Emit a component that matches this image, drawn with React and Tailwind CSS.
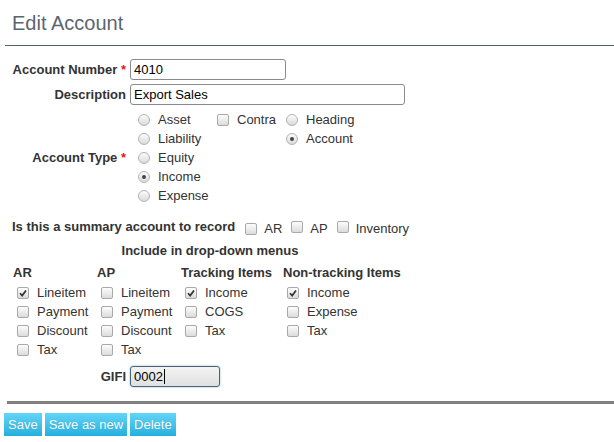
import React from 'react';

// old-style grey checkbox
const Check = ({ checked }) => (
  <span className="relative inline-block w-[12px] h-[12px] shrink-0 rounded-[2px] border border-[#a9a9a9] bg-gradient-to-b from-[#fcfcfc] to-[#dcdcdc]">
    {checked && (
      <svg className="absolute inset-0" width="10" height="10" viewBox="0 0 10 10">
        <path d="M2 5.2 L4.2 7.6 L8 2.6" fill="none" stroke="#333" strokeWidth="1.7" />
      </svg>
    )}
  </span>
);

const Radio = ({ checked }) => (
  <span className="relative inline-flex items-center justify-center w-[12px] h-[12px] shrink-0 rounded-full border border-[#b3b3b3] bg-gradient-to-b from-[#fcfcfc] to-[#dadada]">
    {checked && <span className="w-[4px] h-[4px] rounded-full bg-[#444]" />}
  </span>
);

const Option = ({ radio, checked, label }) => (
  <div className="flex items-center h-[19px]">
    {radio ? <Radio checked={checked} /> : <Check checked={checked} />}
    <span className="ml-[8px]">{label}</span>
  </div>
);

const Req = () => <span className="text-[#e02020]">*</span>;

const columns = [
  { title: 'AR', width: 'w-[84px]', items: [['Lineitem', true], ['Payment'], ['Discount'], ['Tax']] },
  { title: 'AP', width: 'w-[84px]', items: [['Lineitem'], ['Payment'], ['Discount'], ['Tax']] },
  { title: 'Tracking Items', width: 'w-[102px]', items: [['Income', true], ['COGS'], ['Tax']] },
  { title: 'Non-tracking Items', width: 'w-[140px]', items: [['Income', true], ['Expense'], ['Tax']] },
];

const App = () => {
  return (
    <div className="min-h-screen bg-white font-['Liberation_Sans',Arial,sans-serif] text-[13px] text-[#333]">
      {/* Title */}
      <div className="h-[45px] pl-[12px] pt-[11px] text-[20px] leading-[24px] text-[#5b6570]">Edit Account</div>
      <div className="ml-[5px] h-px bg-[#56606a]" />

      <div className="pt-[11px]">
        {/* Account number */}
        <div className="flex items-center h-[25px]">
          <div className="w-[126px] text-right font-bold">
            Account Number <Req />
          </div>
          <div className="ml-[4px] w-[156px] h-[21px] flex items-center pl-[3px] border border-[#8a8a8a] rounded-[3px] text-black">4010</div>
        </div>
        {/* Description */}
        <div className="flex items-center h-[25px]">
          <div className="w-[126px] text-right font-bold">Description</div>
          <div className="ml-[4px] w-[275px] h-[21px] flex items-center pl-[3px] border border-[#8a8a8a] rounded-[3px] text-black">Export Sales</div>
        </div>

        {/* Account type */}
        <div className="flex items-center mt-[3px] h-[96px]">
          <div className="w-[126px] text-right font-bold">
            Account Type <Req />
          </div>
          <div className="flex ml-[12px]">
            <div className="w-[79px]">
              <Option radio label="Asset" />
              <Option radio label="Liability" />
              <Option radio label="Equity" />
              <Option radio checked label="Income" />
              <Option radio label="Expense" />
            </div>
            <div className="w-[69px]">
              <Option label="Contra" />
            </div>
            <div>
              <Option radio label="Heading" />
              <Option radio checked label="Account" />
            </div>
          </div>
        </div>

        {/* Summary account */}
        <div className="flex items-center h-[20px] mt-[11px] pl-[12px]">
          <span className="font-bold">Is this a summary account to record</span>
          <div className="flex items-center ml-[10px] pt-[3px]">
            <Check />
            <span className="ml-[7px]">AR</span>
            <span className="ml-[9px]"><Check /></span>
            <span className="ml-[7px]">AP</span>
            <span className="ml-[9px]"><Check /></span>
            <span className="ml-[7px]">Inventory</span>
          </div>
        </div>

        {/* Drop-down menus */}
        <div className="w-[420px] h-[20px] mt-[4px] flex items-center justify-center font-bold">Include in drop-down menus</div>

        <div className="flex pl-[13px] mt-[2px]">
          {columns.map((col) => (
            <div key={col.title} className={col.width}>
              <div className="h-[20px] flex items-center font-bold whitespace-nowrap">{col.title}</div>
              <div className="pl-[4px]">
                {col.items.map(([label, checked]) => (
                  <Option key={label} label={label} checked={checked} />
                ))}
              </div>
            </div>
          ))}
        </div>

        {/* GIFI */}
        <div className="flex items-center h-[25px] mt-[5px]">
          <div className="w-[126px] text-right font-bold">GIFI</div>
          <div className="ml-[4px] w-[90px] h-[21px] flex items-center pl-[3px] border border-[#45657d] rounded-[3px] bg-gradient-to-b from-[#f3f3f3] to-[#e0e0e0] shadow-[0_0_2px_rgba(69,101,125,0.6)] text-black">
            0002<span className="ml-px w-px h-[15px] bg-black" />
          </div>
        </div>
      </div>

      <div className="ml-[7px] mt-[12px] h-[3px] bg-[#808080]" />

      {/* Buttons */}
      <div className="flex gap-[3px] pl-[4px] mt-[9px]">
        {['Save', 'Save as new', 'Delete'].map((b) => (
          <button
            key={b}
            className="h-[23px] px-[4px] text-[13px] text-white bg-gradient-to-b from-[#62d4f8] to-[#1fb0dd] [text-shadow:0_0_1px_rgba(0,0,0,0.2)]"
          >
            {b}
          </button>
        ))}
      </div>
    </div>
  );
};

export default App;
